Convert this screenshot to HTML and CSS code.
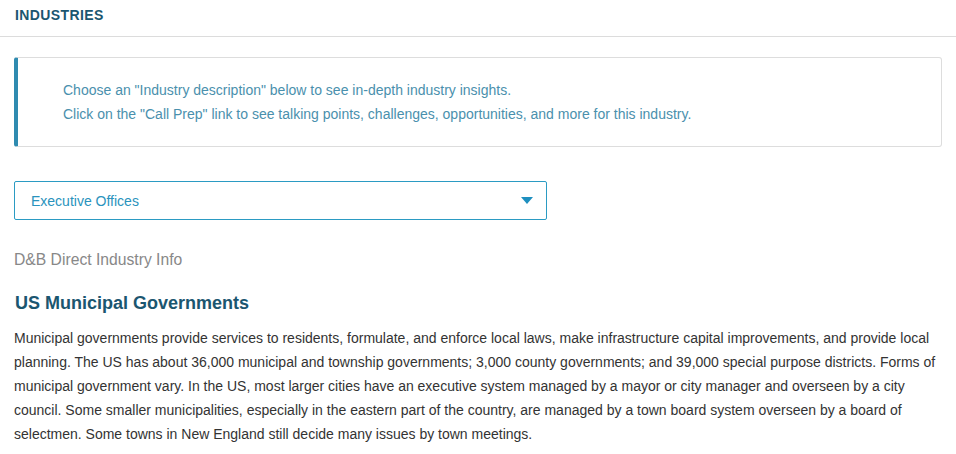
FILE: index.html
```html
<!DOCTYPE html>
<html lang="en">
<head>
<meta charset="utf-8">
<title>Industries</title>
<link rel="stylesheet" href="styles.css">
</head>
<body>
<header class="page-header">
  <h1 class="page-title">INDUSTRIES</h1>
</header>
<main class="content">
  <div class="info-box">
    <p>Choose an "Industry description" below to see in-depth industry insights.</p>
    <p>Click on the "Call Prep" link to see talking points, challenges, opportunities, and more for this industry.</p>
  </div>
  <div class="select">
    <span class="select-value">Executive Offices</span>
    <svg class="select-caret" width="12" height="7" viewBox="0 0 12 7"><path d="M0 0H12L6 7Z" fill="#1e8fbf"/></svg>
  </div>
  <div class="source">D&amp;B Direct Industry Info</div>
  <h2 class="industry-title">US Municipal Governments</h2>
  <p class="industry-desc">Municipal governments provide services to residents, formulate, and enforce local laws, make infrastructure capital improvements, and provide local planning. The US has about 36,000 municipal and township governments; 3,000 county governments; and 39,000 special purpose districts. Forms of municipal government vary. In the US, most larger cities have an executive system managed by a mayor or city manager and overseen by a city council. Some smaller municipalities, especially in the eastern part of the country, are managed by a town board system overseen by a board of selectmen. Some towns in New England still decide many issues by town meetings.</p>
</main>
</body>
</html>
```

FILE: styles.css
```css
* { box-sizing: border-box; }
html, body { margin: 0; padding: 0; background: #fff; }
body {
  font-family: "Liberation Sans", Arial, sans-serif;
  color: #333;
  font-size: 14px;
}
.page-header {
  height: 37px;
  border-bottom: 1px solid #dcdcdc;
  padding: 7px 15px 0 15px;
}
.page-title {
  margin: 0;
  font-size: 14px;
  line-height: 16px;
  font-weight: bold;
  letter-spacing: 0.4px;
  color: #1b5670;
}
.content {
  padding: 20px 14px 0 14px;
}
.info-box {
  width: 928px;
  border: 1px solid #dddddd;
  border-left: 4px solid #2f8bb0;
  border-radius: 3px;
  padding: 20px 20px 20px 45px;
}
.info-box p {
  margin: 0;
  line-height: 24px;
  color: #4a90ad;
  font-size: 14px;
}
.select {
  margin-top: 34px;
  width: 533px;
  height: 39px;
  border: 1px solid #2b9bc3;
  border-radius: 2px;
  display: flex;
  align-items: center;
  justify-content: space-between;
  padding: 0 13px 0 16px;
}
.select-value {
  color: #2a93bd;
  font-size: 14px;
}
.select-caret { display: block; }
.source {
  margin-top: 30px;
  font-size: 15.7px;
  line-height: 20px;
  color: #888;
}
.industry-title {
  margin: 21px 0 0 1px;
  font-size: 18px;
  line-height: 24px;
  font-weight: bold;
  color: #1b5670;
}
.industry-desc {
  margin: 11px 0 0 0;
  width: 928px;
  font-size: 14px;
  line-height: 24px;
  color: #333;
}
```
